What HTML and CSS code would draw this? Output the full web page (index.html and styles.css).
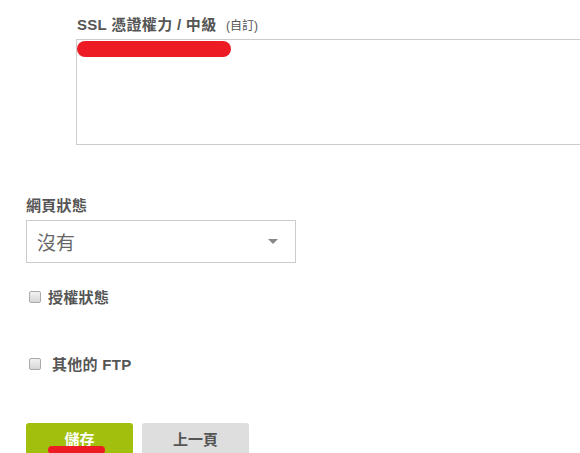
FILE: index.html
```html
<!DOCTYPE html>
<html lang="zh-Hant">
<head>
<meta charset="utf-8">
<link rel="stylesheet" href="styles.css">
</head>
<body>
<div class="page">
  <div class="field-ssl">
    <label class="label">SSL 憑證權力 / 中級 <span class="hint">(自訂)</span></label>
    <div class="textarea">
      <span class="redact"></span>
    </div>
  </div>

  <div class="field-status">
    <label class="label">網頁狀態</label>
    <div class="select">
      <span class="select-text">沒有</span>
      <span class="caret"></span>
    </div>
  </div>

  <label class="check check-auth"><span class="box"></span><span class="check-text">授權狀態</span></label>
  <label class="check check-ftp"><span class="box"></span><span class="check-text">其他的 FTP</span></label>

  <div class="buttons">
    <button class="btn btn-save">儲存<span class="redact-btn"></span></button>
    <button class="btn btn-back">上一頁</button>
  </div>
</div>
</body>
</html>
```

FILE: styles.css
```css
html, body {
  margin: 0;
  padding: 0;
  background: #fff;
  overflow: hidden;
}
body {
  font-family: "Liberation Sans", Arial, "Noto Sans CJK TC", sans-serif;
  color: #555;
}
.page {
  width: 580px;
  height: 453px;
  position: relative;
  overflow: hidden;
}
.label {
  display: block;
  font-size: 15px;
  font-weight: bold;
  color: #555;
  line-height: 18px;
  letter-spacing: 0.3px;
}
.hint {
  font-size: 12px;
  font-weight: normal;
  margin-left: 5px;
  letter-spacing: 0;
}
.field-ssl {
  padding: 16px 0 0 77px;
}
.textarea {
  margin: 4px 0 0 -1px;
  width: 560px;
  height: 104px;
  border: 1px solid #ccc;
  position: relative;
}
.redact {
  position: absolute;
  left: 0;
  top: 1px;
  width: 154px;
  height: 16px;
  border-radius: 8px;
  background: #ed1c24;
}
.field-status {
  padding: 52px 0 0 26px;
}
.field-status .label {
  margin-bottom: 5px;
}
.select {
  border: 1px solid #ccc;
  display: flex;
  align-items: center;
  justify-content: space-between;
  box-sizing: border-box;
  width: 270px;
  height: 43px;
  padding: 0 17px 0 10px;
}
.select-text {
  font-size: 19px;
  color: #666;
  font-weight: normal;
}
.caret {
  width: 0;
  height: 0;
  border-left: 5px solid transparent;
  border-right: 5px solid transparent;
  border-top: 5px solid #888;
}
.check {
  display: flex;
  align-items: center;
  margin-left: 29px;
  font-size: 15px;
  font-weight: bold;
  color: #555;
  letter-spacing: 0.3px;
}
.check-auth {
  margin-top: 23px;
}
.check-ftp {
  margin-top: 46px;
}
.box {
  width: 10px;
  height: 10px;
  border: 1px solid #aaa;
  border-radius: 2px;
  background: linear-gradient(#f2f2f2, #d6d6d6);
  margin-right: 7px;
}
.check-ftp .box {
  margin-right: 11px;
}
.buttons {
  display: flex;
  gap: 9px;
  margin: 49px 0 0 26px;
}
.btn {
  width: 107px;
  height: 36px;
  border: none;
  border-radius: 3px;
  font-family: inherit;
  font-size: 15px;
  font-weight: bold;
  padding: 0 0 6px;
  position: relative;
}
.btn-save {
  background: #a2bf0e;
  color: #fff;
}
.btn-back {
  background: #dedede;
  color: #555;
}
.redact-btn {
  position: absolute;
  left: 22px;
  top: 23px;
  width: 57px;
  height: 8px;
  border-radius: 4px;
  background: #ed1c24;
}
```
